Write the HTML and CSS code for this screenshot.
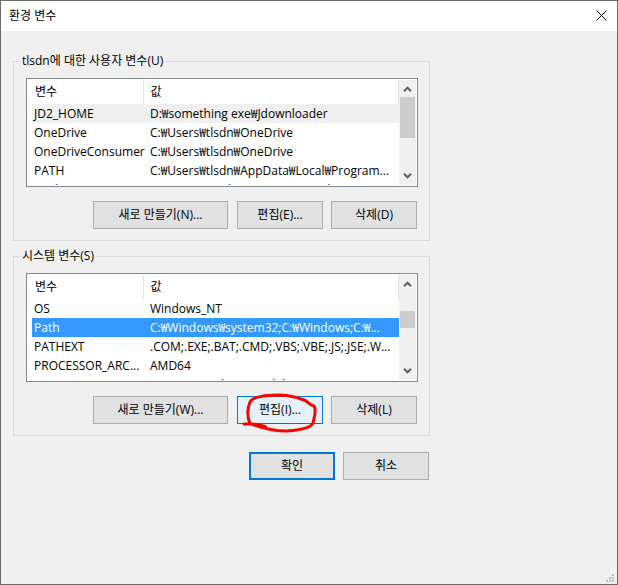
FILE: index.html
```html
<!DOCTYPE html>
<html lang="ko">
<head>
<meta charset="utf-8">
<title>환경 변수</title>
<link rel="stylesheet" href="styles.css">
</head>
<body>
<main class="dialog">
  <header class="titlebar">
    <h1>환경 변수</h1>
    <button class="close" type="button" aria-label="닫기">
      <svg width="11" height="11" viewBox="0 0 11 11"><path d="M.5 .5l10 10M10.5 .5l-10 10"/></svg>
    </button>
  </header>
  <div class="content">
    <fieldset class="group">
      <legend>tlsdn에 대한 사용자 변수(U)</legend>
      <div class="list">
        <div class="view">
          <table>
            <thead><tr><th class="name">변수</th><th>값</th></tr></thead>
            <tbody>
              <tr class="inactive"><td>JD2_HOME</td><td>D:₩something exe₩Jdownloader</td></tr>
              <tr><td>OneDrive</td><td>C:₩Users₩tlsdn₩OneDrive</td></tr>
              <tr><td>OneDriveConsumer</td><td>C:₩Users₩tlsdn₩OneDrive</td></tr>
              <tr><td>PATH</td><td>C:₩Users₩tlsdn₩AppData₩Local₩Program...</td></tr>
              <tr><td>PyCharm</td><td>C:₩Program Files₩JetBrains₩PyCharm...</td></tr>
            </tbody>
          </table>
        </div>
        <div class="scrollbar">
          <svg width="9" height="7" viewBox="0 0 9 7"><path d="M1 5.2l3.5-3.5 3.5 3.5"/></svg>
          <div class="track"><div class="thumb thumb-top"></div></div>
          <svg width="9" height="7" viewBox="0 0 9 7"><path d="M1 1.8l3.5 3.5 3.5-3.5"/></svg>
        </div>
      </div>
      <div class="actions">
        <button class="btn wide" type="button">새로 만들기(N)...</button>
        <button class="btn" type="button">편집(E)...</button>
        <button class="btn" type="button">삭제(D)</button>
      </div>
    </fieldset>
    <fieldset class="group">
      <legend>시스템 변수(S)</legend>
      <div class="list">
        <div class="view">
          <table>
            <thead><tr><th class="name">변수</th><th>값</th></tr></thead>
            <tbody>
              <tr><td>OS</td><td>Windows_NT</td></tr>
              <tr class="selected"><td>Path</td><td>C:₩Windows₩system32;C:₩Windows;C:₩...</td></tr>
              <tr><td>PATHEXT</td><td>.COM;.EXE;.BAT;.CMD;.VBS;.VBE;.JS;.JSE;.W...</td></tr>
              <tr><td>PROCESSOR_ARC...</td><td>AMD64</td></tr>
              <tr><td>PROCESSOR_IDE...</td><td>AMD64 Family 23 Model 8 Stepping 2...</td></tr>
            </tbody>
          </table>
        </div>
        <div class="scrollbar">
          <svg width="9" height="7" viewBox="0 0 9 7"><path d="M1 5.2l3.5-3.5 3.5 3.5"/></svg>
          <div class="track"><div class="thumb thumb-mid"></div></div>
          <svg width="9" height="7" viewBox="0 0 9 7"><path d="M1 1.8l3.5 3.5 3.5-3.5"/></svg>
        </div>
      </div>
      <div class="actions">
        <button class="btn wide" type="button">새로 만들기(W)...</button>
        <span class="marked">
          <button class="btn hover" type="button">편집(I)...</button>
          <svg class="ring" width="86" height="44" viewBox="0 0 86 44"><path d="M7 34Q20 33 29 37M13 34C10 26 10 19 13 12C16 6 33 5 43 5C58 6 64 9 67 10C72 12 72 15 77 16C80 20 77 28 76 33C74 38 64 40 50 41C36 41 25 38 15 34L10 34"/></svg>
        </span>
        <button class="btn" type="button">삭제(L)</button>
      </div>
    </fieldset>
    <div class="footer">
      <button class="btn default" type="button">확인</button>
      <button class="btn" type="button">취소</button>
    </div>
  </div>
  <svg class="grip" width="8" height="8" viewBox="0 0 8 8"><path d="M6 0h2v2h-2zM3 3h2v2h-2zM6 3h2v2h-2zM0 6h2v2h-2zM3 6h2v2h-2zM6 6h2v2h-2z"/></svg>
</main>
</body>
</html>
```

FILE: styles.css
```css
* { box-sizing: border-box; }

body {
  margin: 0;
  font: 12px/16px "Open Sans", "Noto Sans CJK KR", sans-serif;
  color: #000;
}

.dialog {
  position: relative;
  min-height: 100vh;
  border: 1px solid #6b6b6b;
  background: #f0f0f0;
}

.titlebar {
  display: flex;
  align-items: center;
  justify-content: space-between;
  height: 30px;
  padding: 0 10px 1px 8px;
  background: #fff;
}

h1 { margin: 0; font-size: 12px; font-weight: 400; }

.close { display: flex; padding: 0; border: 0; background: none; }
.close path { fill: none; stroke: #000; stroke-width: 1; }

.content { max-width: 429px; padding: 22px 0 0 12px; }

.group {
  min-width: 0;
  margin: 0;
  padding: 9px 11px 11px 12px;
  border: 1px solid #dcdcdc;
}
.group + .group { margin-top: 7px; }

legend { margin-left: -5px; padding: 0 1px; height: 16px; }

.list {
  display: flex;
  height: 109px;
  padding: 1px;
  border: 1px solid #828790;
  background: #fff;
}

.view { flex: 1; min-width: 0; overflow: hidden; padding-left: 4px; }

table { width: 100%; table-layout: fixed; border-collapse: collapse; }

th, td {
  height: 19px;
  padding: 0 0 0 2px;
  text-align: left;
  font-weight: 400;
  white-space: nowrap;
}
th { height: 24px; padding-left: 3px; border-right: 1px solid #e5e5e5; }
td + td, th + th { padding-left: 7px; }
.name { width: 111px; }
.inactive { background: #f0f0f0; }
.selected { background: #3399ff; color: #fff; }

.scrollbar {
  display: flex;
  flex-direction: column;
  align-items: center;
  width: 17px;
  padding: 6px 1px;
  background: #f0f0f0;
}
.scrollbar path { fill: none; stroke: #606060; stroke-width: 2; }
.track { flex: 1; align-self: stretch; padding: 4px 0; }
.thumb { background: #cdcdcd; }
.thumb-top { height: 41px; }
.thumb-mid { height: 17px; margin-top: 19px; }

.actions, .footer { display: flex; justify-content: flex-end; padding-right: 1px; }
.actions { gap: 8px; margin-top: 14px; }
.actions .wide { margin-right: 1px; }
.footer { gap: 8px; margin-top: 16px; }

.btn {
  width: 86px;
  height: 28px;
  padding: 0;
  border: 1px solid #adadad;
  background: #e1e1e1;
  font: inherit;
  color: inherit;
}
.wide { width: 135px; }
.hover { border-color: #0078d7; background: #e5f1fb; }
.default { border: 2px solid #0078d7; }

.marked { position: relative; display: flex; }
.ring { position: absolute; top: -6px; left: 0; pointer-events: none; }
.ring path { fill: none; stroke: #f00; stroke-width: 3; stroke-linecap: round; stroke-linejoin: round; }

.grip { position: absolute; right: 3px; bottom: 2px; fill: #bfbfbf; }
```
